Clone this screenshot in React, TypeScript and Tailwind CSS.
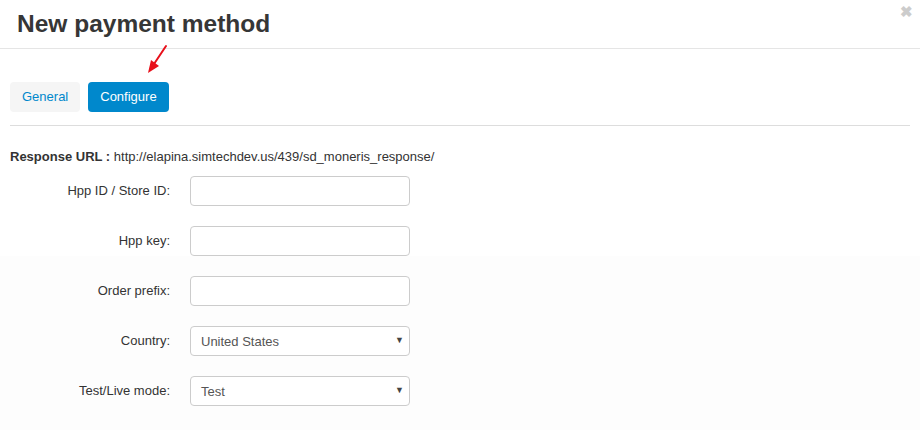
import React from 'react';

const fields = [
  { label: 'Hpp ID / Store ID:', type: 'input' },
  { label: 'Hpp key:', type: 'input' },
  { label: 'Order prefix:', type: 'input' },
  { label: 'Country:', type: 'select', value: 'United States' },
  { label: 'Test/Live mode:', type: 'select', value: 'Test' },
];

const Field = ({ label, type, value }: { label: string; type: string; value?: string }) => (
  <div className="flex items-center h-[30px] mb-[20px]">
    <label className="w-[170px] text-right text-[13px] text-[#333]">{label}</label>
    <div className="ml-[20px] w-[220px] h-[30px] border border-[#ccc] rounded-[4px] bg-white flex items-center justify-between px-[10px]">
      {type === 'select' && (
        <>
          <span className="text-[13px] text-[#555] pt-[1px]">{value}</span>
          <span className="text-[9px] text-[#444] mr-[-5px]">▼</span>
        </>
      )}
    </div>
  </div>
);

export default function App() {
  return (
    <div className="w-[920px] h-[430px] bg-white font-['Liberation_Sans',Arial,sans-serif] overflow-hidden relative">
      <div className="h-[49px] border-b border-[#e5e5e5] px-[17px] flex items-center relative">
        <h1 className="text-[24.5px] font-bold text-[#363636] leading-none pt-[1px]">New payment method</h1>
        <span className="absolute right-[7px] top-[4px] text-[15px] text-[#ccc] font-bold leading-none">✖</span>
      </div>

      <svg className="absolute left-[144px] top-[44px]" width="26" height="32" viewBox="0 0 26 32">
        <path d="M22 2 L10 20" stroke="#e8101b" strokeWidth="2" fill="none" strokeLinecap="round" />
        <path d="M4 29 L7 16 L15 22 Z" fill="#e8101b" />
      </svg>

      <div className="px-[10px]">
        <div className="flex gap-[8px] pt-[33px] pb-[13px] border-b border-[#ddd]">
          <button className="h-[30px] px-[12px] rounded-[4px] bg-[#f5f5f5] text-[13px] text-[#0088cc]">General</button>
          <button className="h-[30px] px-[12px] rounded-[4px] bg-[#0088cc] text-[13px] text-white">Configure</button>
        </div>

        <p className="text-[13px] text-[#333] mt-[23px] leading-[16px]">
          <span className="font-bold">Response URL :</span> http://elapina.simtechdev.us/439/sd_moneris_response/
        </p>
      </div>

      <div className="mt-[11px]">
        <div className="bg-white">
          <Field {...fields[0]} />
          <div className="h-[30px] flex items-center">
            <label className="w-[170px] text-right text-[13px] text-[#333]">{fields[1].label}</label>
            <div className="ml-[20px] w-[220px] h-[30px] border border-[#ccc] rounded-[4px] bg-white" />
          </div>
        </div>
        <div className="bg-[#fdfdfd] pt-[20px] h-[300px]">
          {fields.slice(2).map((f) => (
            <Field key={f.label} {...f} />
          ))}
        </div>
      </div>
    </div>
  );
}
